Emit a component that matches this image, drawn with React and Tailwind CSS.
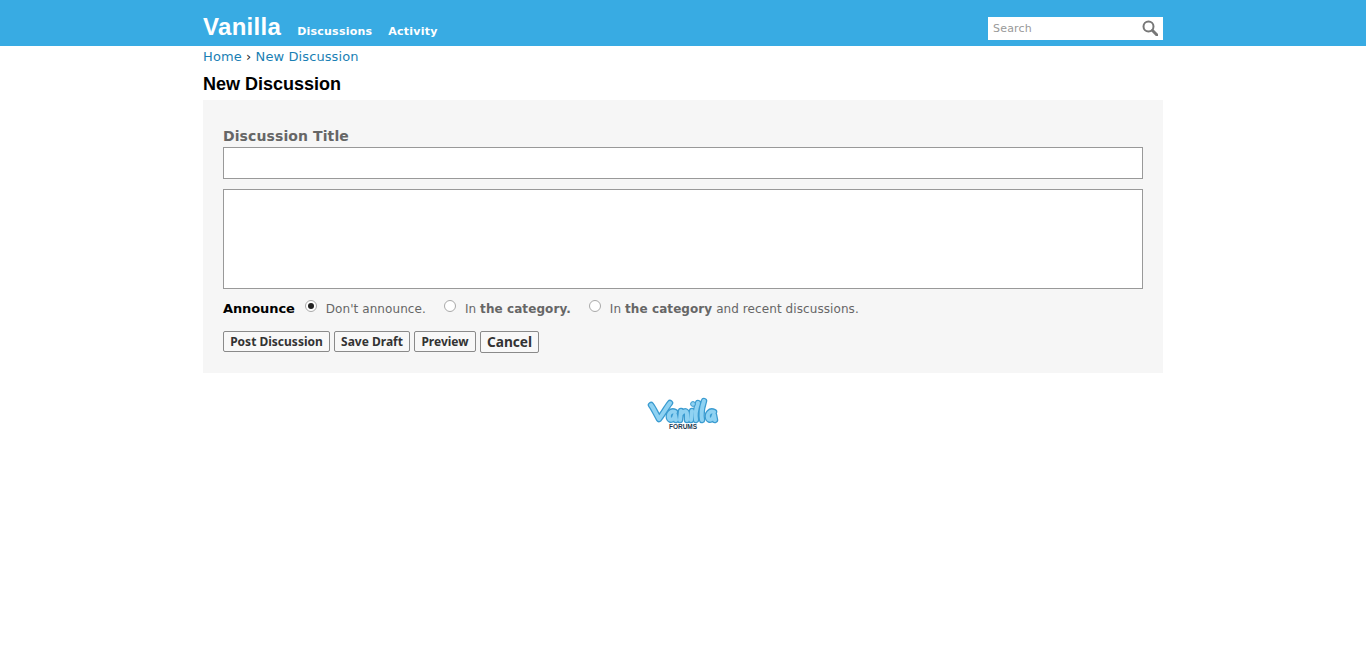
import React from "react";

const dejavu = "font-['DejaVu_Sans',sans-serif]";

function Radio({ checked }) {
  return (
    <span className="w-[12px] h-[12px] rounded-full border border-[#a9a9a9] bg-white flex items-center justify-center shrink-0 -translate-y-[3px]">
      {checked && <span className="w-[6px] h-[6px] rounded-full bg-[#222]" />}
    </span>
  );
}

function Btn({ children, cls = "" }) {
  return (
    <button className={`border border-[#8a8a8a] rounded-[2px] bg-[#f8f8f8] text-[#333] font-bold font-['Noto_Sans',sans-serif] leading-none ${cls}`}>
      {children}
    </button>
  );
}

function Logo() {
  return (
    <svg width="72" height="34" viewBox="0 0 72 34" className="block">
      <g fill="none" strokeLinecap="round" strokeLinejoin="round">
        <g stroke="#3a9bd0" strokeWidth="6.5">
          <path d="M4 8c3 4 5 9 8 14 4-5 7-11 11-16" />
          <path d="M28 15c-4-2-7 2-6 6 1 3 5 2 6-3l1 5" />
          <path d="M34 14l-1 9M34 17c2-3 6-4 6 0l0 6" />
          <path d="M45 14l-1 9" />
          <path d="M51 6c-2 6-3 12-2 17M57 4c-2 6-3 13-2 19" />
          <path d="M67 15c-4-2-7 2-6 6 1 3 5 2 6-3l1 5" />
        </g>
        <g stroke="#8fd2f2" strokeWidth="4">
          <path d="M4 8c3 4 5 9 8 14 4-5 7-11 11-16" />
          <path d="M28 15c-4-2-7 2-6 6 1 3 5 2 6-3l1 5" />
          <path d="M34 14l-1 9M34 17c2-3 6-4 6 0l0 6" />
          <path d="M45 14l-1 9" />
          <path d="M51 6c-2 6-3 12-2 17M57 4c-2 6-3 13-2 19" />
          <path d="M67 15c-4-2-7 2-6 6 1 3 5 2 6-3l1 5" />
        </g>
      </g>
      <circle cx="46" cy="7" r="2.4" fill="#8fd2f2" stroke="#3a9bd0" />
      <text x="36" y="32" textAnchor="middle" fontSize="6.5" fontWeight="700" fill="#1e3a52" fontFamily="'Liberation Sans', sans-serif">FORUMS</text>
    </svg>
  );
}

export default function App() {
  return (
    <div className={`min-h-[648px] bg-white ${dejavu} text-[13px]`}>
      <header className="bg-[#38abe3] h-[46px]">
        <div className="w-[960px] mx-auto flex justify-between items-start">
          <div className="flex items-start">
            <span className="font-['Liberation_Sans',sans-serif] font-bold text-[24px] leading-[28px] text-white mt-[13px] mr-[16px] tracking-[0.3px]">Vanilla</span>
            <nav className="flex gap-[16px] mt-[24px] text-[11px] leading-[15px] font-bold text-white tracking-[0.23px]">
              <span>Discussions</span>
              <span>Activity</span>
            </nav>
          </div>
          <div className="mt-[17px] w-[175px] h-[23px] bg-white flex items-center justify-between pl-[5px] pr-[5px]">
            <span className="text-[11px] text-[#999] tracking-[0.2px] translate-y-[1px]">Search</span>
            <svg width="16" height="16" viewBox="0 0 16 16" fill="none" stroke="#777" strokeLinecap="round" className="-translate-y-[1px]">
              <circle cx="6.5" cy="6.5" r="5" strokeWidth="2" />
              <path d="M10.5 10.5L15 15" strokeWidth="3" />
            </svg>
          </div>
        </div>
      </header>
      <main className="w-[960px] mx-auto">
        <div className="mt-[3px] text-[13px] leading-[15px] h-[15px] text-[#1a7fb4] tracking-[0.1px]">
          Home <span className="text-[#222]">›</span> New Discussion
        </div>
        <h1 className="mt-[10px] font-['Liberation_Sans',sans-serif] font-bold text-[18px] leading-[21px] text-black">New Discussion</h1>
        <div className="mt-[5px] h-[273px] bg-[#f6f6f6] px-[20px] pt-[28px]">
          <label className="block text-[14px] leading-[17px] font-bold text-[#666] tracking-[0.1px]">Discussion Title</label>
          <div className="mt-[2px] h-[32px] border border-[#999] bg-white" />
          <div className="mt-[10px] h-[100px] border border-[#999] bg-white" />
          <div className="mt-[12px] h-[16px] flex items-center text-[12px] text-[#666] leading-[15px] tracking-[0.08px]">
            <span className="font-bold text-[13px] text-black mr-[10px] tracking-[-0.1px] -translate-y-[1px]">Announce</span>
            <Radio checked />
            <span className="ml-[9px] mr-[18px]">Don't announce.</span>
            <Radio />
            <span className="ml-[9px] mr-[18px]">In <b>the category.</b></span>
            <Radio />
            <span className="ml-[9px]">In <b>the category</b> and recent discussions.</span>
          </div>
          <div className="mt-[14px] flex gap-[4px] items-start">
            <Btn cls="h-[21px] text-[12px] w-[107px]">Post Discussion</Btn>
            <Btn cls="h-[21px] text-[12px] w-[76px]">Save Draft</Btn>
            <Btn cls="h-[21px] text-[12px] w-[62px]">Preview</Btn>
            <Btn cls="h-[22px] text-[13.7px] w-[59px]">Cancel</Btn>
          </div>
        </div>
        <div className="mt-[24px] flex justify-center">
          <Logo />
        </div>
      </main>
    </div>
  );
}
